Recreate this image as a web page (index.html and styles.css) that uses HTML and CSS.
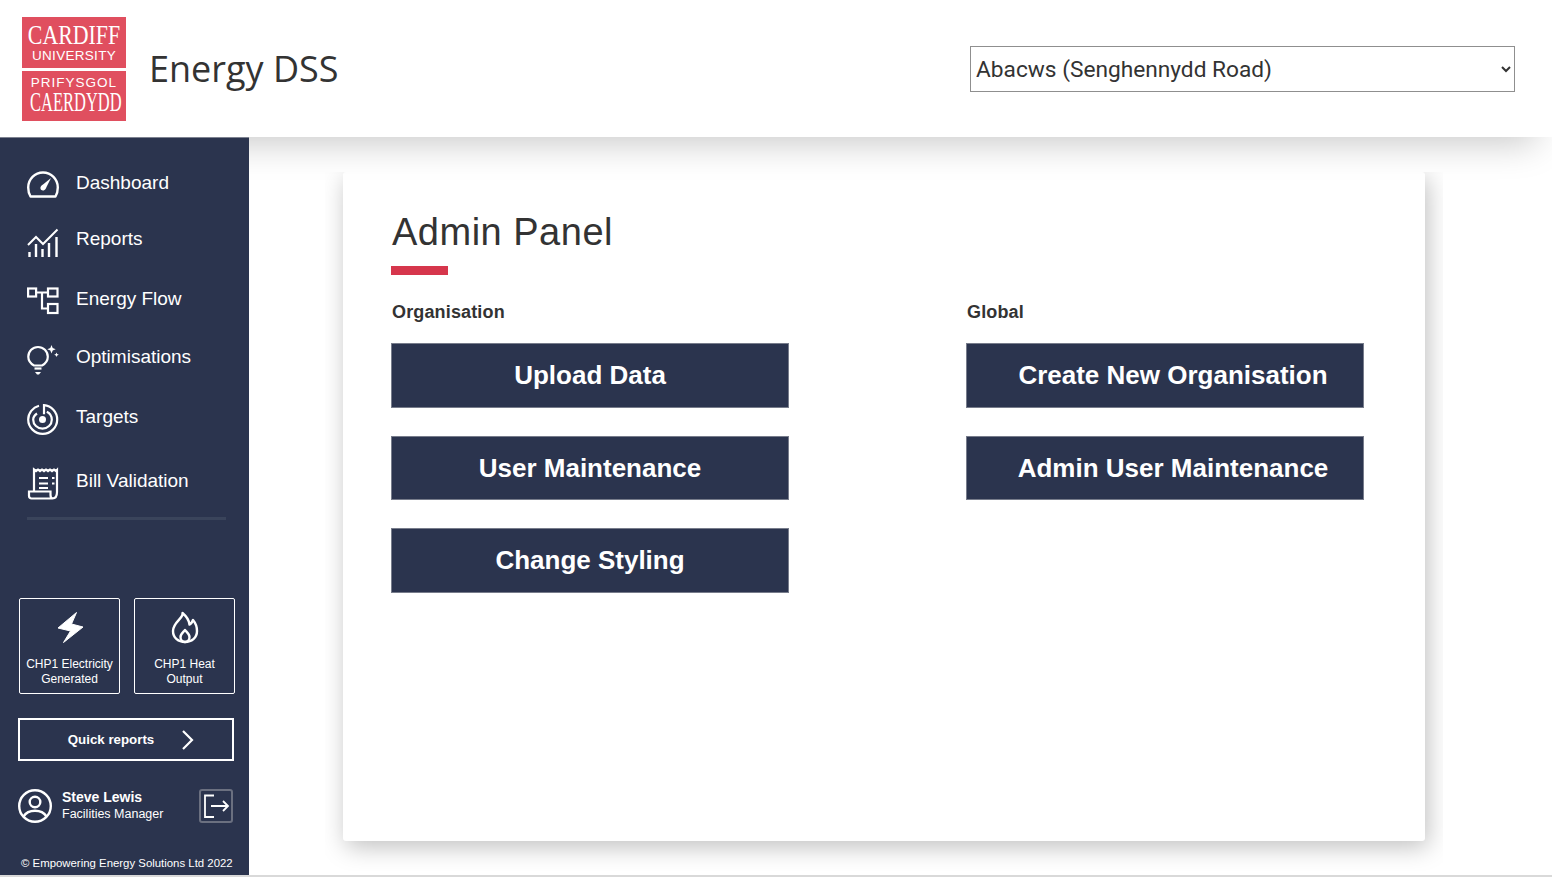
FILE: index.html
```html
<!DOCTYPE html>
<html lang="en">
<head>
    <meta charset="UTF-8">
    <meta name="viewport" content="width=device-width, initial-scale=1.0">
    <title>Energy DSS</title>
    <link rel="stylesheet" href="styles.css">
</head>
<body>

<header class="topbar">
    <div class="logo">
        <div class="logo-block">
            <span class="logo-big logo-cardiff">CARDIFF</span>
            <span class="logo-small">UNIVERSITY</span>
        </div>
        <div class="logo-block">
            <span class="logo-small logo-wide">PRIFYSGOL</span>
            <span class="logo-big logo-caerdydd">CAERDYDD</span>
        </div>
    </div>
    <div class="app-name">Energy DSS</div>
    <select class="site-select">
        <option>Abacws (Senghennydd Road)</option>
    </select>
</header>

<div class="layout">
    <aside class="sidebar">
        <nav class="nav">
            <a class="nav-item">
                <svg class="nav-icon icon-27 nudge-1" viewBox="0 0 32 27" fill="none" stroke="#fff" stroke-width="2.4">
                    <path d="M3.5 25.5h25c1.500-2.500 2.300-5.500 2.300-9C30.800 8.300 24.200 1.500 16 1.500S1.200 8.300 1.200 16.500c0 3.500.8 6.500 2.300 9z" stroke-linejoin="round"/>
                    <path d="M24 7l-8 6.500c-1.600 1-3 2.500-2.500 4.300.5 1.700 2.500 2.200 4 1.200 1.400-1 1.800-2.500 2.500-4z" fill="#fff" stroke="none"/>
                </svg>
                <span>Dashboard</span>
            </a>
            <a class="nav-item">
                <svg class="nav-icon icon-29 nudge-3" viewBox="0 0 32 29" fill="none" stroke="#fff" stroke-width="2">
                    <path d="M1 17l8-8 7 7L30.500 1.500"/>
                    <path d="M2.500 29v-5M9 29V16M15.500 29v-8M22 29V15M29.500 29V9" stroke-width="2.400"/>
                </svg>
                <span>Reports</span>
            </a>
            <a class="nav-item">
                <svg class="nav-icon icon-27 nudge-1" viewBox="0 0 32 27" fill="none" stroke="#fff" stroke-width="2.200">
                    <rect x="1.100" y="1.500" width="8" height="8"/>
                    <rect x="21" y="1.500" width="9.500" height="8"/>
                    <rect x="21" y="17" width="9.500" height="9"/>
                    <path d="M9 5.500h12M15 5.500v16h6"/>
                </svg>
                <span>Energy Flow</span>
            </a>
            <a class="nav-item">
                <svg class="nav-icon icon-30 nudge-3" viewBox="0 0 32 30" fill="none" stroke="#fff" stroke-width="2.200">
                    <path d="M7 20.500c-3.500-2-5.700-5-5.700-8.800C1.300 6.300 5.700 2 11 2s9.800 4.300 9.800 9.700c0 3.800-2.200 6.800-5.800 8.800z"/>
                    <path d="M7.500 23.500h7"/>
                    <path d="M8 27h6l-2 2.500h-2z" fill="#fff" stroke="none"/>
                    <path d="M24.500 0l1.200 3 3 1.200-3 1.200-1.200 3-1.200-3-3-1.200 3-1.200zM29.500 7.500l.7 1.600 1.600.7-1.600.7-.7 1.600-.7-1.600-1.600-.7 1.600-.7z" fill="#fff" stroke="none"/>
                </svg>
                <span>Optimisations</span>
            </a>
            <a class="nav-item">
                <svg class="nav-icon icon-31 nudge-2" viewBox="0 0 32 31" fill="none" stroke="#fff" stroke-width="2.200">
                    <path d="M12 1.800C5.700 3.400 1.200 9 1.200 15.500c0 7.900 6.500 14.300 14.500 14.300s14.500-6.400 14.500-14.300c0-7.500-5.800-13.700-13.200-14.300v9"/>
                    <path d="M10 9.500c-2.300 1.500-3.800 3.400-3.800 6.200 0 5 4.200 9 9.300 9s9.300-4 9.300-9c0-3.500-2-6.500-5-8"/>
                    <circle cx="15.500" cy="15.500" r="3.500" fill="#fff" stroke="none"/>
                </svg>
                <span>Targets</span>
            </a>
            <a class="nav-item">
                <svg class="nav-icon icon-32 nudge-3" viewBox="0 0 32 32" fill="none" stroke="#fff" stroke-width="2.200">
                    <path d="M7 23V1.500l2 1.500 2-1.500 2 1.500 2-1.500 2 1.500 2-1.500 2 1.500 2-1.500 2 1.500 2-1.500 2 1.500 1-1V24c0 3.500-1.500 6.500-4.500 6.500H4.500c-1.500 0-2.500-1-2.500-2.500v-4.500h21.500V27c0 2 1 3.500 2.500 3.500"/>
                    <path d="M12 10h9M12 15.500h9M12 20h9M25 10h2.500M25 15.500h2.500" stroke-width="2"/>
                </svg>
                <span>Bill Validation</span>
            </a>
        </nav>
        <div class="nav-rule"></div>

        <div class="sidebar-bottom">
            <div class="tiles">
                <div class="tile">
                    <svg class="tile-icon" viewBox="0 0 30 36" fill="#fff" stroke="#fff" stroke-linejoin="round">
                        <path d="M21.500 3.500L3 19l12.500 3L8.500 33.500 28 18l-11.500-3z"/>
                    </svg>
                    <div>CHP1 Electricity Generated</div>
                </div>
                <div class="tile">
                    <svg class="tile-icon" viewBox="0 0 30 36" fill="none" stroke="#fff" stroke-width="2.400" stroke-linejoin="round">
                        <path d="M12.500 4c1.500 5-9.500 9-9.500 18 0 7 5.500 11 12 11s12-4 12-11c0-4-1.500-8-4-11-1 2.500-2 4-3.500 4.500C19 11 16 7 12.500 4z"/>
                        <path d="M15 21c-1.500 2-4.500 4-4.500 7 0 3 2 5 4.500 5s4.500-2 4.500-5c0-3-3-5-4.500-7z"/>
                    </svg>
                    <div>CHP1 Heat Output</div>
                </div>
            </div>

            <a class="quick-reports">
                <span>Quick reports</span>
                <svg class="quick-arrow" viewBox="0 0 13 20" fill="none" stroke="#fff" stroke-width="2.200">
                    <path d="M2 1l9 9-9 9"/>
                </svg>
            </a>

            <div class="user">
                <svg class="user-icon" viewBox="0 0 34 34" fill="none" stroke="#fff" stroke-width="2.400">
                    <circle cx="17" cy="17" r="15.800"/>
                    <circle cx="17" cy="13" r="5.300"/>
                    <path d="M5.500 27.500C8 23.500 12 21.800 17 21.800s9 1.700 11.500 5.700"/>
                </svg>
                <div class="user-text">
                    <div class="user-name">Steve Lewis</div>
                    <div class="user-role">Facilities Manager</div>
                </div>
                <div class="logout">
                    <svg viewBox="0 0 30 30" fill="none" stroke="#fff" stroke-width="1.800">
                        <path d="M13 4.500H4V26h9"/>
                        <path d="M10 15h17M22 10l5 5-5 5"/>
                    </svg>
                </div>
            </div>

            <div class="copyright">© Empowering Energy Solutions Ltd 2022</div>
        </div>
    </aside>

    <main class="main">
        <section class="card">
            <h1>Admin Panel</h1>
            <div class="title-rule"></div>
            <div class="columns">
                <div class="column">
                    <h2>Organisation</h2>
                    <button>Upload Data</button>
                    <button>User Maintenance</button>
                    <button>Change Styling</button>
                </div>
                <div class="column column-global">
                    <h2>Global</h2>
                    <button>Create New Organisation</button>
                    <button>Admin User Maintenance</button>
                </div>
            </div>
        </section>
    </main>
</div>

</body>
</html>
```

FILE: styles.css
```css
* {
    box-sizing: border-box;
}
html, body {
    height: 100%;
}
body {
    margin: 0;
    display: flex;
    flex-direction: column;
    overflow: hidden;
    font-family: "Liberation Sans", Arial, sans-serif;
    color: #333;
    background-color: #fff;
    border-bottom: 2px solid #d9d9d9;
}

/* top bar */
.topbar {
    height: 137px;
    flex: none;
    display: flex;
    align-items: center;
    padding: 0 37px 0 22px;
    background-color: #fff;
    position: relative;
    z-index: 1;
    box-shadow: 0 22px 36px -16px rgba(0,0,0,0.22);
}
.logo {
    width: 104px;
    display: flex;
    flex-direction: column;
    gap: 3px;
    color: #fff;
    font-family: "Liberation Serif", serif;
    text-align: center;
    margin-top: 1px;
}
.logo-block {
    height: 50.5px;
    background-color: #e04f5f;
    display: flex;
    flex-direction: column;
    justify-content: center;
    overflow: hidden;
    line-height: 1;
}
.logo-big {
    display: block;
    margin: 0 -20px;
    white-space: nowrap;
}
.logo-cardiff {
    font-size: 27px;
    transform: scaleX(0.81);
}
.logo-caerdydd {
    font-size: 27px;
    transform: scaleX(0.61);
}
.logo-small {
    font-family: "Liberation Sans", sans-serif;
    font-size: 13.500px;
    letter-spacing: 0.300px;
}
.logo-wide {
    letter-spacing: 1px;
}
.app-name {
    margin-left: 23px;
    font-family: "Open Sans", sans-serif;
    font-size: 36px;
}
.site-select {
    margin-left: auto;
    width: 545px;
    height: 46px;
    padding: 1px 0 0 1px;
    font-family: Roboto, sans-serif;
    font-size: 22.700px;
    color: #333;
    background-color: #fff;
    border: 1px solid #8f8f8f;
    border-radius: 0;
}

.layout {
    flex: 1;
    min-height: 0;
    display: flex;
}

/* sidebar */
.sidebar {
    width: 249px;
    flex: none;
    display: flex;
    flex-direction: column;
    background-color: #2b344e;
    border-top: 1px solid #7d8290;
    color: #fff;
    position: relative;
    z-index: 2;
}
.nav {
    display: grid;
    grid-template-rows: 26px 26px 34px 22px 38px 30px;
    row-gap: 30px;
    padding: 32px 0 0 27px;
}
.nav-item {
    display: flex;
    align-items: center;
    gap: 17px;
    font-size: 19px;
}
.nav-icon {
    width: 32px;
    flex: none;
    overflow: visible;
}
.icon-27 { height: 27px; }
.icon-29 { height: 29px; }
.icon-30 { height: 30px; }
.icon-31 { height: 31px; }
.icon-32 { height: 32px; }
.nudge-1 { transform: translateY(1px); }
.nudge-2 { transform: translateY(2px); }
.nudge-3 { transform: translateY(3px); }
.nav-rule {
    height: 3px;
    margin: 21px 23px 0 27px;
    background-color: #3a445b;
}
.sidebar-bottom {
    margin-top: auto;
    padding: 0 15px 6px 18px;
}
.tiles {
    display: flex;
    gap: 14px;
    padding-left: 1px;
}
.tile {
    width: 101px;
    height: 96px;
    flex: none;
    padding: 10px 1px 0;
    border: 1px solid #fff;
    border-radius: 2px;
    text-align: center;
    font-size: 12px;
    line-height: 15px;
}
.tile-icon {
    display: block;
    width: 30px;
    height: 36px;
    margin: 0 auto 12px;
}
.quick-reports {
    height: 43px;
    margin-top: 24px;
    padding-left: 10px;
    display: flex;
    align-items: center;
    justify-content: center;
    gap: 27px;
    border: 2px solid #fff;
    font-size: 13.300px;
    font-weight: bold;
}
.quick-arrow {
    width: 13px;
    height: 20px;
}
.user {
    display: flex;
    align-items: center;
    margin-top: 28px;
}
.user-icon {
    width: 34px;
    height: 34px;
    flex: none;
}
.user-text {
    flex: 1;
    margin-left: 10px;
    font-size: 12.500px;
    line-height: 17px;
}
.user-name {
    font-size: 14px;
    font-weight: bold;
}
.logout {
    width: 34px;
    height: 34px;
    flex: none;
    margin-right: 1px;
    border: 2px solid #6b7080;
    border-radius: 3px;
}
.logout svg {
    display: block;
    width: 30px;
    height: 30px;
}
.copyright {
    margin: 34px 0 0 3px;
    font-size: 11.400px;
    white-space: nowrap;
}

/* main panel */
.main {
    flex: 1;
    min-width: 0;
    padding: 35px 127px 34px 94px;
}
.card {
    height: 100%;
    padding: 36px 48px 0;
    background-color: #fff;
    border-radius: 3px;
    box-shadow: 3px 6px 24px rgba(0,0,0,0.25);
    clip-path: inset(0 -18px -30px -18px);
}
h1 {
    margin: 0 0 0 1px;
    font-size: 38px;
    font-weight: normal;
    letter-spacing: 0.500px;
    line-height: 48px;
}
.title-rule {
    width: 57px;
    height: 9px;
    margin-top: 10px;
    background-color: #d6364c;
}
.columns {
    display: grid;
    grid-template-columns: 398px 398px;
    column-gap: 177px;
    margin-top: 25px;
}
.column {
    display: flex;
    flex-direction: column;
}
h2 {
    margin: 0 0 19px 1px;
    font-size: 18px;
    letter-spacing: 0.150px;
    line-height: 24px;
}
button {
    height: 64.500px;
    margin-bottom: 28px;
    padding-top: 2px;
    font-family: inherit;
    font-size: 26px;
    font-weight: bold;
    color: #fff;
    background-color: #2b344e;
    border: 1px solid #777c8b;
    cursor: pointer;
}
.column-global button {
    padding-left: 22px;
}
```
